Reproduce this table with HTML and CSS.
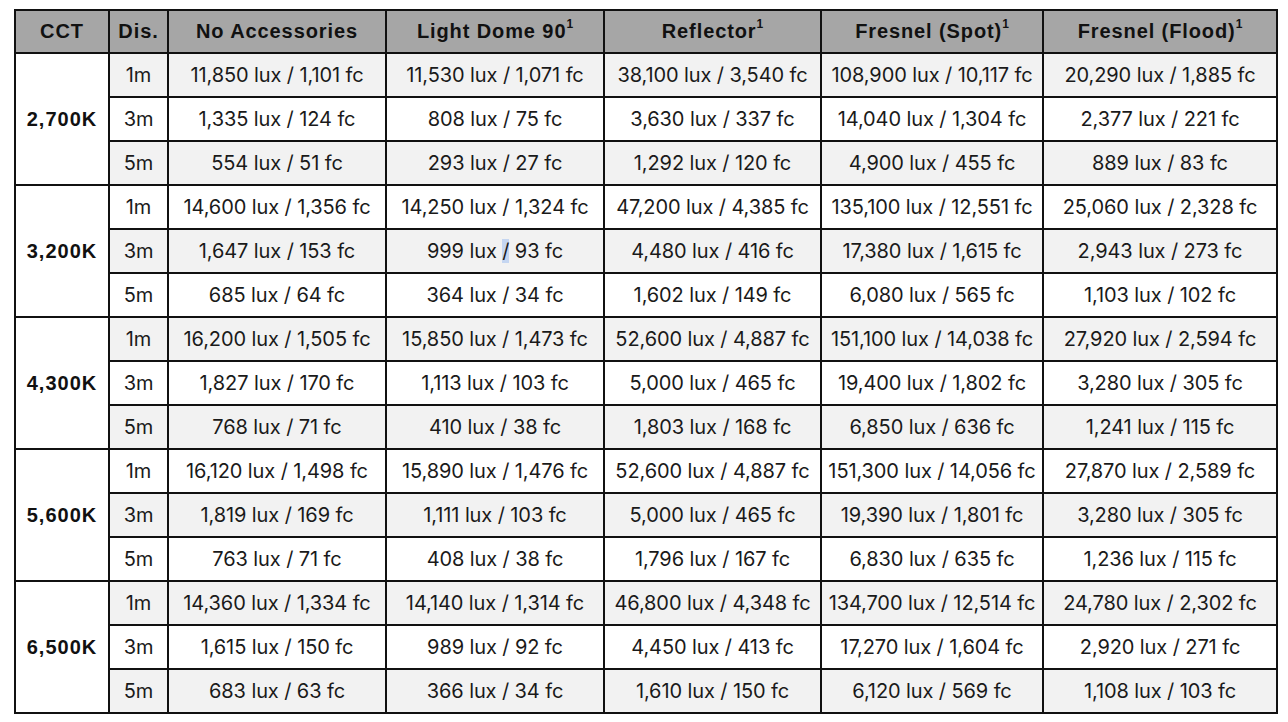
FILE: index.html
```html
<!DOCTYPE html>
<html>
<head>
<meta charset="utf-8">
<link rel="stylesheet" href="styles.css">
</head>
<body>
<table class="lux">
<colgroup>
<col class="c-cct"><col class="c-dis"><col class="c-a"><col class="c-b"><col class="c-c"><col class="c-d"><col class="c-e">
</colgroup>
<thead>
<tr><th>CCT</th><th>Dis.</th><th>No Accessories</th><th>Light Dome 90<sup>1</sup></th><th>Reflector<sup>1</sup></th><th>Fresnel (Spot)<sup>1</sup></th><th>Fresnel (Flood)<sup>1</sup></th></tr>
</thead>
<tbody>
<tr class="g"><td class="cct g" rowspan="3">2,700K</td><td>1m</td><td>11,850 lux / 1,101 fc</td><td>11,530 lux / 1,071 fc</td><td>38,100 lux / 3,540 fc</td><td>108,900 lux / 10,117 fc</td><td>20,290 lux / 1,885 fc</td></tr>
<tr><td>3m</td><td>1,335 lux / 124 fc</td><td>808 lux / 75 fc</td><td>3,630 lux / 337 fc</td><td>14,040 lux / 1,304 fc</td><td>2,377 lux / 221 fc</td></tr>
<tr class="g"><td>5m</td><td>554 lux / 51 fc</td><td>293 lux / 27 fc</td><td>1,292 lux / 120 fc</td><td>4,900 lux / 455 fc</td><td>889 lux / 83 fc</td></tr>

<tr><td class="cct" rowspan="3">3,200K</td><td>1m</td><td>14,600 lux / 1,356 fc</td><td>14,250 lux / 1,324 fc</td><td>47,200 lux / 4,385 fc</td><td>135,100 lux / 12,551 fc</td><td>25,060 lux / 2,328 fc</td></tr>
<tr class="g"><td>3m</td><td>1,647 lux / 153 fc</td><td>999 lux <span class="sel">/</span> 93 fc</td><td>4,480 lux / 416 fc</td><td>17,380 lux / 1,615 fc</td><td>2,943 lux / 273 fc</td></tr>
<tr><td>5m</td><td>685 lux / 64 fc</td><td>364 lux / 34 fc</td><td>1,602 lux / 149 fc</td><td>6,080 lux / 565 fc</td><td>1,103 lux / 102 fc</td></tr>

<tr class="g"><td class="cct g" rowspan="3">4,300K</td><td>1m</td><td>16,200 lux / 1,505 fc</td><td>15,850 lux / 1,473 fc</td><td>52,600 lux / 4,887 fc</td><td>151,100 lux / 14,038 fc</td><td>27,920 lux / 2,594 fc</td></tr>
<tr><td>3m</td><td>1,827 lux / 170 fc</td><td>1,113 lux / 103 fc</td><td>5,000 lux / 465 fc</td><td>19,400 lux / 1,802 fc</td><td>3,280 lux / 305 fc</td></tr>
<tr class="g"><td>5m</td><td>768 lux / 71 fc</td><td>410 lux / 38 fc</td><td>1,803 lux / 168 fc</td><td>6,850 lux / 636 fc</td><td>1,241 lux / 115 fc</td></tr>

<tr><td class="cct" rowspan="3">5,600K</td><td>1m</td><td>16,120 lux / 1,498 fc</td><td>15,890 lux / 1,476 fc</td><td>52,600 lux / 4,887 fc</td><td>151,300 lux / 14,056 fc</td><td>27,870 lux / 2,589 fc</td></tr>
<tr class="g"><td>3m</td><td>1,819 lux / 169 fc</td><td>1,111 lux / 103 fc</td><td>5,000 lux / 465 fc</td><td>19,390 lux / 1,801 fc</td><td>3,280 lux / 305 fc</td></tr>
<tr><td>5m</td><td>763 lux / 71 fc</td><td>408 lux / 38 fc</td><td>1,796 lux / 167 fc</td><td>6,830 lux / 635 fc</td><td>1,236 lux / 115 fc</td></tr>

<tr class="g"><td class="cct g" rowspan="3">6,500K</td><td>1m</td><td>14,360 lux / 1,334 fc</td><td>14,140 lux / 1,314 fc</td><td>46,800 lux / 4,348 fc</td><td>134,700 lux / 12,514 fc</td><td>24,780 lux / 2,302 fc</td></tr>
<tr><td>3m</td><td>1,615 lux / 150 fc</td><td>989 lux / 92 fc</td><td>4,450 lux / 413 fc</td><td>17,270 lux / 1,604 fc</td><td>2,920 lux / 271 fc</td></tr>
<tr class="g"><td>5m</td><td>683 lux / 63 fc</td><td>366 lux / 34 fc</td><td>1,610 lux / 150 fc</td><td>6,120 lux / 569 fc</td><td>1,108 lux / 103 fc</td></tr>
</tbody>
</table>
</body>
</html>
```
FILE: styles.css
```css
html, body {
  margin: 0;
  padding: 0;
  background: #ffffff;
}
body {
  padding: 9px 0 0 14px;
  font-family: "Inter", "Liberation Sans", sans-serif;
  color: #1a1a1a;
}
.lux {
  border-collapse: collapse;
  table-layout: fixed;
  width: 1262px;
  border: 2px solid #0d0d0d;
}
.c-cct { width: 94px; }
.c-dis { width: 59px; }
.c-a { width: 218px; }
.c-b { width: 218px; }
.c-c { width: 217px; }
.c-d { width: 222px; }
.c-e { width: 234px; }
.lux th, .lux td {
  border: 2px solid #111;
  text-align: center;
  vertical-align: middle;
  padding: 0;
  white-space: nowrap;
}
.lux th {
  background: #a6a6a6;
  height: 41px;
  font-family: "Liberation Sans", Arial, sans-serif;
  font-weight: bold;
  font-size: 20px;
  letter-spacing: 0.9px;
  color: #111;
}
.lux th sup {
  font-size: 12px;
  vertical-align: top;
  line-height: 1;
  position: relative;
  top: -2px;
  letter-spacing: 0;
}
.lux td {
  height: 42px;
  font-size: 20px;
  letter-spacing: -0.1px;
  background: #ffffff;
}
.lux tr.g td {
  background: #f2f2f2;
}
.lux tr.g td.cct, .lux td.cct {
  background: #ffffff;
}
.lux td.cct.g {
  background: #f2f2f2;
}
.lux td.cct {
  font-family: "Liberation Sans", Arial, sans-serif;
  font-weight: bold;
  font-size: 20px;
  letter-spacing: 1px;
  color: #111;
}
.sel {
  background: #c5d6f1;
}
```
